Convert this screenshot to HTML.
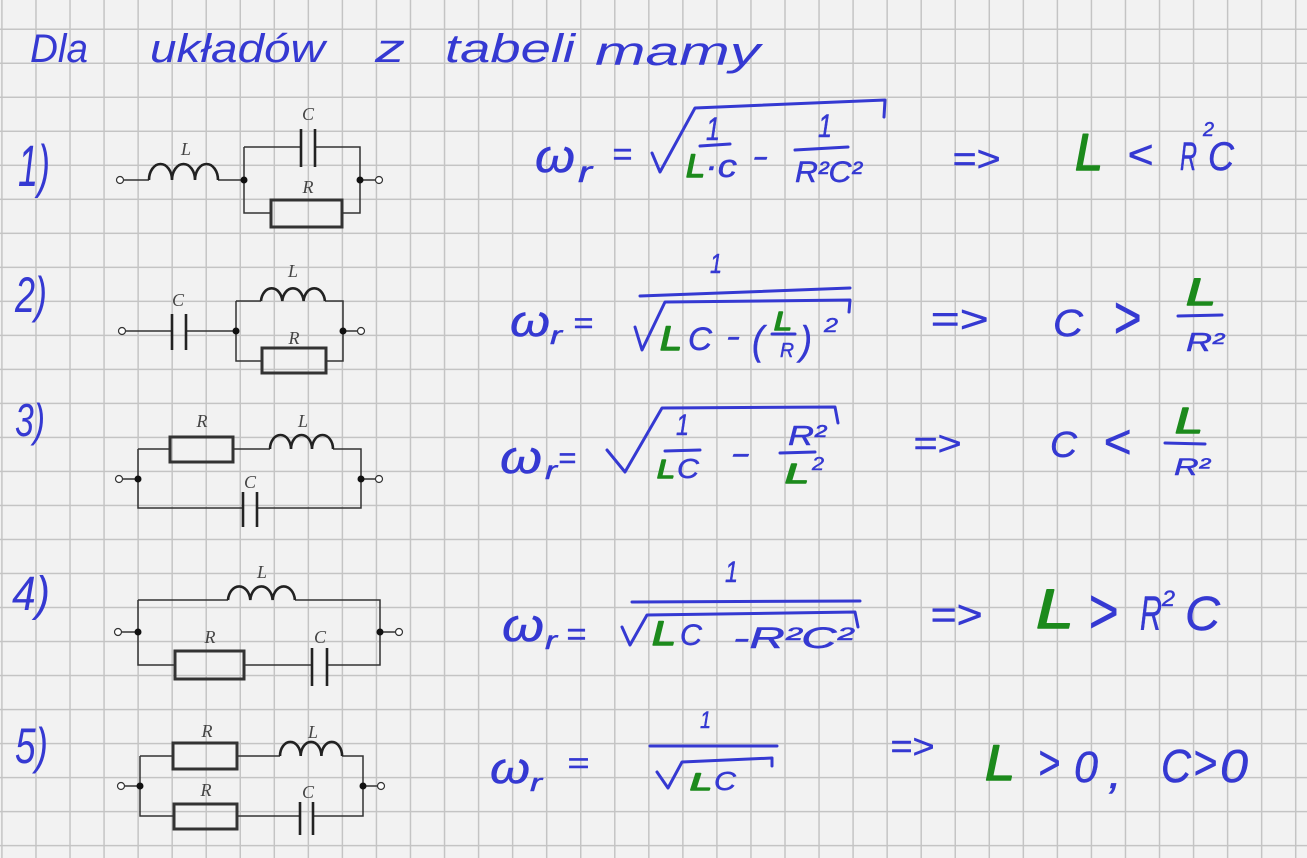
<!DOCTYPE html>
<html><head><meta charset="utf-8"><style>
html,body{margin:0;padding:0;background:#f2f2f2;}
body{width:1307px;height:858px;overflow:hidden;
background-color:#f2f2f2;
background-image:linear-gradient(to right,#c4c4c4 0,#c4c4c4 1.6px,transparent 1.6px),linear-gradient(to bottom,#c4c4c4 0,#c4c4c4 1.6px,transparent 1.6px);
background-size:34.05px 34.02px;background-position:1.2px 28.5px;}
svg{display:block}
.i{font-family:"Liberation Sans","DejaVu Sans",sans-serif;font-style:italic;fill:#3539d2;stroke:#3539d2;stroke-width:0.5;stroke-linejoin:round}
.g{fill:#1c8a1c;stroke:#1c8a1c;stroke-width:1.5}
.p{fill:none;stroke:#3539d2;stroke-width:3;stroke-linecap:round;stroke-linejoin:round}
.w{fill:none;stroke:#333;stroke-width:1.5}
.ind{fill:none;stroke:#222;stroke-width:2.6}
.res{fill:none;stroke:#333;stroke-width:3}
.cap{stroke:#222;stroke-width:2.6}
.lb{font-family:"Liberation Serif",serif;font-style:italic;font-size:18px;fill:#444;text-anchor:middle}
.n{fill:#111}
.t{fill:#fff;stroke:#333;stroke-width:1.2}
</style></head><body>
<svg width="1307" height="858" xmlns="http://www.w3.org/2000/svg">

<!-- Circuit 1 -->
<path class="w" d="M124,180H149M218,180H244M244,147H301M315,147H360V213H342M244,147V213H271M360,180H375"/>
<path class="ind" d="M149,180a11.5,16 0 0 1 23,0a11.5,16 0 0 1 23,0a11.5,16 0 0 1 23,0"/>
<line class="cap" x1="301" y1="129" x2="301" y2="167"/><line class="cap" x1="315" y1="129" x2="315" y2="167"/>
<rect class="res" x="271" y="200" width="71" height="27"/>
<circle class="n" cx="244" cy="180" r="3.5"/><circle class="n" cx="360" cy="180" r="3.5"/>
<circle class="t" cx="120" cy="180" r="3.5"/><circle class="t" cx="379" cy="180" r="3.5"/>
<text class="lb" x="186" y="155">L</text><text class="lb" x="308" y="120">C</text><text class="lb" x="308" y="193">R</text>

<!-- Circuit 2 -->
<path class="w" d="M126,331H172M186,331H236M236,301H261M325,301H343V361H326M236,301V361H262M343,331H357"/>
<path class="ind" d="M261,301a10.7,14 0 0 1 21.3,0a10.7,14 0 0 1 21.3,0a10.7,14 0 0 1 21.3,0"/>
<line class="cap" x1="172" y1="314" x2="172" y2="350"/><line class="cap" x1="186" y1="314" x2="186" y2="350"/>
<rect class="res" x="262" y="348" width="64" height="25"/>
<circle class="n" cx="236" cy="331" r="3.5"/><circle class="n" cx="343" cy="331" r="3.5"/>
<circle class="t" cx="122" cy="331" r="3.5"/><circle class="t" cx="361" cy="331" r="3.5"/>
<text class="lb" x="178" y="306">C</text><text class="lb" x="293" y="277">L</text><text class="lb" x="294" y="344">R</text>

<!-- Circuit 3 -->
<path class="w" d="M123,479H138M138,449V508H243M257,508H361V449H333M270,449H233M170,449H138M361,479H375"/>
<path class="ind" d="M270,449a10.5,14 0 0 1 21,0a10.5,14 0 0 1 21,0a10.5,14 0 0 1 21,0"/>
<rect class="res" x="170" y="437" width="63" height="25"/>
<line class="cap" x1="243" y1="492" x2="243" y2="527"/><line class="cap" x1="257" y1="492" x2="257" y2="527"/>
<circle class="n" cx="138" cy="479" r="3.5"/><circle class="n" cx="361" cy="479" r="3.5"/>
<circle class="t" cx="119" cy="479" r="3.5"/><circle class="t" cx="379" cy="479" r="3.5"/>
<text class="lb" x="202" y="427">R</text><text class="lb" x="303" y="427">L</text><text class="lb" x="250" y="488">C</text>

<!-- Circuit 4 -->
<path class="w" d="M122,632H138M138,600V665H175M244,665H312M327,665H380V600H295M228,600H138M380,632H395"/>
<path class="ind" d="M228,600a11.2,15 0 0 1 22.3,0a11.2,15 0 0 1 22.3,0a11.2,15 0 0 1 22.3,0"/>
<rect class="res" x="175" y="651" width="69" height="28"/>
<line class="cap" x1="312" y1="648" x2="312" y2="686"/><line class="cap" x1="327" y1="648" x2="327" y2="686"/>
<circle class="n" cx="138" cy="632" r="3.5"/><circle class="n" cx="380" cy="632" r="3.5"/>
<circle class="t" cx="118" cy="632" r="3.5"/><circle class="t" cx="399" cy="632" r="3.5"/>
<text class="lb" x="262" y="578">L</text><text class="lb" x="210" y="643">R</text><text class="lb" x="320" y="643">C</text>

<!-- Circuit 5 -->
<path class="w" d="M125,786H140M140,756V816H174M237,816H300M313,816H363V756H342M280,756H237M173,756H140M363,786H377"/>
<path class="ind" d="M280,756a10.3,14 0 0 1 20.7,0a10.3,14 0 0 1 20.7,0a10.3,14 0 0 1 20.7,0"/>
<rect class="res" x="173" y="743" width="64" height="26"/>
<rect class="res" x="174" y="804" width="63" height="25"/>
<line class="cap" x1="300" y1="802" x2="300" y2="835"/><line class="cap" x1="313" y1="802" x2="313" y2="835"/>
<circle class="n" cx="140" cy="786" r="3.5"/><circle class="n" cx="363" cy="786" r="3.5"/>
<circle class="t" cx="121" cy="786" r="3.5"/><circle class="t" cx="381" cy="786" r="3.5"/>
<text class="lb" x="207" y="737">R</text><text class="lb" x="313" y="738">L</text><text class="lb" x="206" y="796">R</text><text class="lb" x="308" y="798">C</text>

<!-- Title -->
<g class="i" font-size="40" style="stroke-width:0">
<text x="30" y="62" textLength="58" lengthAdjust="spacingAndGlyphs">Dla</text>
<text x="150" y="62" textLength="175" lengthAdjust="spacingAndGlyphs">układów</text>
<text x="375" y="62" textLength="30" lengthAdjust="spacingAndGlyphs">z</text>
<text x="445" y="62" textLength="130" lengthAdjust="spacingAndGlyphs">tabeli</text>
<text x="595" y="65" textLength="165" lengthAdjust="spacingAndGlyphs">mamy</text>
</g>

<!-- Numbers -->
<g class="i" style="stroke-width:0">
<text x="18" y="186" font-size="58" textLength="32" lengthAdjust="spacingAndGlyphs">1)</text>
<text x="15" y="312" font-size="50" textLength="32" lengthAdjust="spacingAndGlyphs">2)</text>
<text x="15" y="436" font-size="46" textLength="30" lengthAdjust="spacingAndGlyphs">3)</text>
<text x="12" y="610" font-size="48" textLength="38" lengthAdjust="spacingAndGlyphs">4)</text>
<text x="15" y="763" font-size="50" textLength="33" lengthAdjust="spacingAndGlyphs">5)</text>
</g>

<!-- Row 1 -->
<path class="p" d="M652,153L660,172L695,108L885,100L884,117M700,146L730,144M795,150L848,147"/>
<g class="i">
<text x="535" y="172" font-size="46" textLength="40" lengthAdjust="spacingAndGlyphs">ω</text>
<text x="578" y="182" font-size="30" textLength="14" lengthAdjust="spacingAndGlyphs">r</text>
<text x="612" y="165" font-size="32" textLength="20" lengthAdjust="spacingAndGlyphs">=</text>
<text x="706" y="140" font-size="32" textLength="14" lengthAdjust="spacingAndGlyphs">1</text>
<text x="705" y="177" font-size="32" textLength="32" lengthAdjust="spacingAndGlyphs">·c</text>
<text x="752" y="166" font-size="30" textLength="16" lengthAdjust="spacingAndGlyphs">-</text>
<text x="818" y="137" font-size="32" textLength="14" lengthAdjust="spacingAndGlyphs">1</text>
<text x="795" y="182" font-size="30" textLength="67" lengthAdjust="spacingAndGlyphs">R²C²</text>
<text x="952" y="171" font-size="36" textLength="48" lengthAdjust="spacingAndGlyphs">=&gt;</text>
<text x="1127" y="168" font-size="40" textLength="26" lengthAdjust="spacingAndGlyphs">&lt;</text>
<text x="1180" y="170" font-size="40" textLength="17" lengthAdjust="spacingAndGlyphs">R</text>
<text x="1203" y="136" font-size="20" textLength="11" lengthAdjust="spacingAndGlyphs">2</text>
<text x="1208" y="170" font-size="40" textLength="26" lengthAdjust="spacingAndGlyphs">C</text>
<text class="g" x="686" y="177" font-size="32" textLength="19" lengthAdjust="spacingAndGlyphs">L</text>
<text class="g" x="1075" y="170" font-size="52" textLength="28" lengthAdjust="spacingAndGlyphs">L</text>
</g>

<!-- Row 2 -->
<path class="p" d="M640,296L850,288M635,327L642,350L665,302L850,300L849,312M772,334L795,334M1178,316L1222,315"/>
<g class="i">
<text x="710" y="273" font-size="28" textLength="12" lengthAdjust="spacingAndGlyphs">1</text>
<text x="688" y="350" font-size="32" textLength="24" lengthAdjust="spacingAndGlyphs">C</text>
<text x="726" y="346" font-size="30" textLength="14" lengthAdjust="spacingAndGlyphs">-</text>
<text x="752" y="354" font-size="40" textLength="12" lengthAdjust="spacingAndGlyphs">(</text>
<text x="780" y="357" font-size="20" textLength="14" lengthAdjust="spacingAndGlyphs">R</text>
<text x="800" y="354" font-size="40" textLength="12" lengthAdjust="spacingAndGlyphs">)</text>
<text x="824" y="332" font-size="20" textLength="14" lengthAdjust="spacingAndGlyphs">2</text>
<text x="510" y="336" font-size="44" textLength="40" lengthAdjust="spacingAndGlyphs">ω</text>
<text x="550" y="344" font-size="26" textLength="12" lengthAdjust="spacingAndGlyphs">r</text>
<text x="573" y="333" font-size="30" textLength="20" lengthAdjust="spacingAndGlyphs">=</text>
<text x="930" y="332" font-size="38" textLength="58" lengthAdjust="spacingAndGlyphs">=&gt;</text>
<text x="1053" y="336" font-size="38" textLength="30" lengthAdjust="spacingAndGlyphs">C</text>
<text x="1113" y="338" font-size="60" textLength="28" lengthAdjust="spacingAndGlyphs">&gt;</text>
<text x="1186" y="351" font-size="26" textLength="38" lengthAdjust="spacingAndGlyphs">R²</text>
<text class="g" x="660" y="350" font-size="34" textLength="22" lengthAdjust="spacingAndGlyphs">L</text>
<text class="g" x="774" y="330" font-size="26" textLength="18" lengthAdjust="spacingAndGlyphs">L</text>
<text class="g" x="1186" y="305" font-size="38" textLength="30" lengthAdjust="spacingAndGlyphs">L</text>
</g>

<!-- Row 3 -->
<path class="p" d="M607,450L625,472L662,408L835,407L838,423M665,451L700,450M780,453L815,452M1165,443L1205,444"/>
<g class="i">
<text x="500" y="473" font-size="46" textLength="42" lengthAdjust="spacingAndGlyphs">ω</text>
<text x="545" y="479" font-size="26" textLength="12" lengthAdjust="spacingAndGlyphs">r</text>
<text x="558" y="468" font-size="30" textLength="18" lengthAdjust="spacingAndGlyphs">=</text>
<text x="676" y="435" font-size="30" textLength="13" lengthAdjust="spacingAndGlyphs">1</text>
<text x="677" y="478" font-size="28" textLength="22" lengthAdjust="spacingAndGlyphs">C</text>
<text x="730" y="463" font-size="30" textLength="20" lengthAdjust="spacingAndGlyphs">-</text>
<text x="788" y="445" font-size="28" textLength="38" lengthAdjust="spacingAndGlyphs">R²</text>
<text x="812" y="470" font-size="18" textLength="12" lengthAdjust="spacingAndGlyphs">2</text>
<text x="913" y="455" font-size="34" textLength="48" lengthAdjust="spacingAndGlyphs">=&gt;</text>
<text x="1050" y="457" font-size="36" textLength="27" lengthAdjust="spacingAndGlyphs">C</text>
<text x="1103" y="458" font-size="48" textLength="28" lengthAdjust="spacingAndGlyphs">&lt;</text>
<text x="1174" y="475" font-size="24" textLength="36" lengthAdjust="spacingAndGlyphs">R²</text>
<text class="g" x="657" y="478" font-size="26" textLength="18" lengthAdjust="spacingAndGlyphs">L</text>
<text class="g" x="785" y="483" font-size="28" textLength="24" lengthAdjust="spacingAndGlyphs">L</text>
<text class="g" x="1175" y="433" font-size="36" textLength="28" lengthAdjust="spacingAndGlyphs">L</text>
</g>

<!-- Row 4 -->
<path class="p" d="M632,602L860,601M622,627L630,645L647,615L855,612L858,627"/>
<g class="i">
<text x="725" y="582" font-size="30" textLength="13" lengthAdjust="spacingAndGlyphs">1</text>
<text x="680" y="645" font-size="30" textLength="22" lengthAdjust="spacingAndGlyphs">C</text>
<text x="733" y="648" font-size="30" textLength="120" lengthAdjust="spacingAndGlyphs">-R²C²</text>
<text x="502" y="641" font-size="46" textLength="42" lengthAdjust="spacingAndGlyphs">ω</text>
<text x="545" y="649" font-size="26" textLength="12" lengthAdjust="spacingAndGlyphs">r</text>
<text x="566" y="645" font-size="32" textLength="20" lengthAdjust="spacingAndGlyphs">=</text>
<text x="930" y="628" font-size="40" textLength="52" lengthAdjust="spacingAndGlyphs">=&gt;</text>
<text x="1088" y="633" font-size="64" textLength="30" lengthAdjust="spacingAndGlyphs">&gt;</text>
<text x="1140" y="630" font-size="48" textLength="22" lengthAdjust="spacingAndGlyphs">R</text>
<text x="1162" y="606" font-size="22" textLength="13" lengthAdjust="spacingAndGlyphs">2</text>
<text x="1185" y="630" font-size="48" textLength="35" lengthAdjust="spacingAndGlyphs">C</text>
<text class="g" x="652" y="645" font-size="34" textLength="24" lengthAdjust="spacingAndGlyphs">L</text>
<text class="g" x="1036" y="628" font-size="56" textLength="38" lengthAdjust="spacingAndGlyphs">L</text>
</g>

<!-- Row 5 -->
<path class="p" d="M650,746L777,746M657,772L668,788L682,762L772,758L772,766"/>
<g class="i">
<text x="700" y="728" font-size="24" textLength="11" lengthAdjust="spacingAndGlyphs">1</text>
<text x="714" y="790" font-size="26" textLength="22" lengthAdjust="spacingAndGlyphs">C</text>
<text x="490" y="783" font-size="44" textLength="40" lengthAdjust="spacingAndGlyphs">ω</text>
<text x="530" y="791" font-size="24" textLength="12" lengthAdjust="spacingAndGlyphs">r</text>
<text x="567" y="773" font-size="30" textLength="22" lengthAdjust="spacingAndGlyphs">=</text>
<text x="890" y="758" font-size="34" textLength="44" lengthAdjust="spacingAndGlyphs">=&gt;</text>
<text x="1038" y="779" font-size="48" textLength="22" lengthAdjust="spacingAndGlyphs">&gt;</text>
<text x="1074" y="782" font-size="44" textLength="24" lengthAdjust="spacingAndGlyphs">0</text>
<text x="1108" y="788" font-size="44" textLength="14" lengthAdjust="spacingAndGlyphs">,</text>
<text x="1161" y="782" font-size="46" textLength="30" lengthAdjust="spacingAndGlyphs">C</text>
<text x="1193" y="779" font-size="48" textLength="24" lengthAdjust="spacingAndGlyphs">&gt;</text>
<text x="1220" y="782" font-size="46" textLength="28" lengthAdjust="spacingAndGlyphs">0</text>
<text class="g" x="690" y="790" font-size="24" textLength="22" lengthAdjust="spacingAndGlyphs">L</text>
<text class="g" x="985" y="780" font-size="50" textLength="30" lengthAdjust="spacingAndGlyphs">L</text>
</g>
</svg>
</body></html>
